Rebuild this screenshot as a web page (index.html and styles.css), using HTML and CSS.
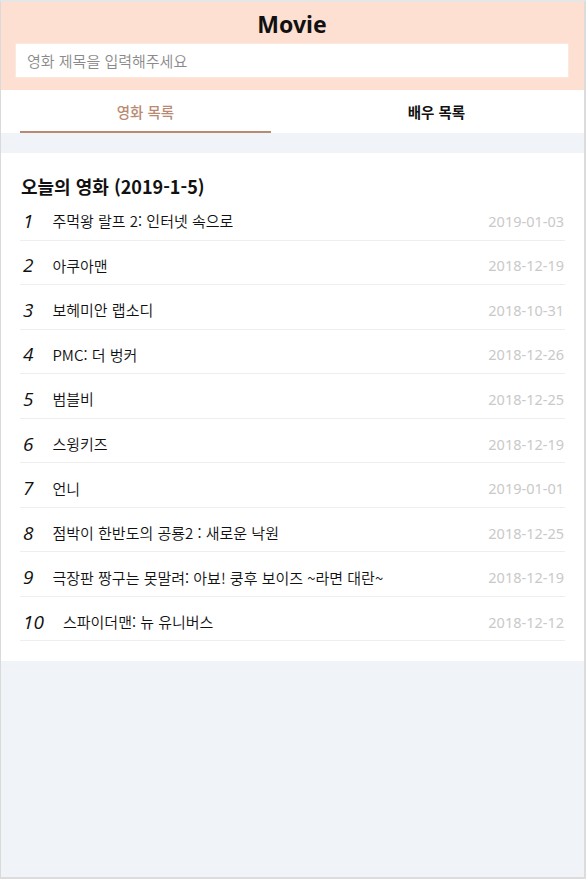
FILE: index.html
```html
<!DOCTYPE html>
<html lang="ko">
<head>
<meta charset="utf-8">
<link rel="stylesheet" href="styles.css">
</head>
<body>
<div class="frame">
  <header class="header">
    <h1 class="logo">Movie</h1>
    <input class="search" type="text" placeholder="영화 제목을 입력해주세요">
  </header>
  <nav class="tabs">
    <div class="tab tab-active">영화 목록</div>
    <div class="tab">배우 목록</div>
  </nav>
  <div class="gap"></div>
  <section class="card">
    <h2 class="card-title">오늘의 영화 (2019-1-5)</h2>
    <ul class="list">
      <li class="row"><span class="rank">1</span><span class="name">주먹왕 랄프 2: 인터넷 속으로</span><span class="date">2019-01-03</span></li>
      <li class="row"><span class="rank">2</span><span class="name">아쿠아맨</span><span class="date">2018-12-19</span></li>
      <li class="row"><span class="rank">3</span><span class="name">보헤미안 랩소디</span><span class="date">2018-10-31</span></li>
      <li class="row"><span class="rank">4</span><span class="name">PMC: 더 벙커</span><span class="date">2018-12-26</span></li>
      <li class="row"><span class="rank">5</span><span class="name">범블비</span><span class="date">2018-12-25</span></li>
      <li class="row"><span class="rank">6</span><span class="name">스윙키즈</span><span class="date">2018-12-19</span></li>
      <li class="row"><span class="rank">7</span><span class="name">언니</span><span class="date">2019-01-01</span></li>
      <li class="row"><span class="rank">8</span><span class="name">점박이 한반도의 공룡2 : 새로운 낙원</span><span class="date">2018-12-25</span></li>
      <li class="row"><span class="rank">9</span><span class="name">극장판 짱구는 못말려: 아뵤! 쿵후 보이즈 ~라면 대란~</span><span class="date">2018-12-19</span></li>
      <li class="row"><span class="rank">10</span><span class="name">스파이더맨: 뉴 유니버스</span><span class="date">2018-12-12</span></li>
    </ul>
  </section>
  <div class="rest"></div>
</div>
</body>
</html>
```

FILE: styles.css
```css
* { box-sizing: border-box; }
html, body { margin: 0; padding: 0; height: 100%; }
body {
  font-family: "Noto Sans", "Noto Sans CJK KR", sans-serif;
  background: #e9e9ea;
  color: #111;
}
.frame {
  height: 879px;
  border-top: 2px solid #e6e6e7;
  border-left: 1px solid #dadada;
  border-right: 2px solid #dcdcdc;
  border-bottom: 2px solid #dcdcdc;
  background: #f0f3f8;
  display: flex;
  flex-direction: column;
}
.header {
  background: #fde0d2;
  padding: 6px 15px 12px 14px;
  display: flex;
  flex-direction: column;
  align-items: stretch;
}
.logo {
  margin: 0;
  text-align: center;
  font-size: 23px;
  line-height: 32px;
  font-weight: 700;
  color: #111;
}
.search {
  margin-top: 3px;
  height: 35px;
  border: 1px solid #fbe9e0;
  background: #fff;
  padding: 0 11px;
  font-family: "Noto Sans CJK KR", sans-serif;
  font-size: 15px;
  font-weight: 350;
  color: #333;
  outline: none;
}
.search::placeholder { color: #8a8a8a; }
.tabs {
  background: #fff;
  display: flex;
  padding: 0 22px 0 19px;
  gap: 40px;
  height: 43px;
}
.tab {
  flex: 1;
  display: flex;
  align-items: center;
  justify-content: center;
  font-family: "Noto Sans CJK KR", sans-serif;
  font-size: 14.5px;
  font-weight: 700;
  color: #111;
  padding-top: 1px;
  border-bottom: 2px solid transparent;
}
.tab-active {
  color: #b98a73;
  font-weight: 500;
  border-bottom-color: #b98a73;
}
.gap { height: 20px; }
.card {
  background: #fff;
  padding: 23px 19px 20px 19px;
}
.card-title {
  margin: 0 0 0 1px;
  font-family: "Noto Sans CJK KR", sans-serif;
  font-size: 18px;
  line-height: 20px;
  font-weight: 700;
  color: #111;
}
.list {
  list-style: none;
  margin: 0;
  padding: 0;
}
.row {
  display: flex;
  align-items: center;
  height: 44.56px;
  padding-top: 6px;
  border-bottom: 1px solid #eeeeee;
}
.rank {
  font-family: "Open Sans", "Noto Sans", sans-serif;
  font-style: italic;
  font-weight: 400;
  font-size: 19px;
  color: #111;
  padding-left: 3px;
  margin-right: 19px;
}
.name {
  flex: 1;
  font-family: "Noto Sans CJK KR", sans-serif;
  font-size: 15px;
  font-weight: 350;
  color: #111;
  white-space: nowrap;
}
.date {
  font-family: "Noto Sans", "Noto Sans CJK KR", sans-serif;
  font-size: 14.5px;
  color: #c9c9c9;
  padding-right: 1px;
}
.rest { flex: 1; }
```
